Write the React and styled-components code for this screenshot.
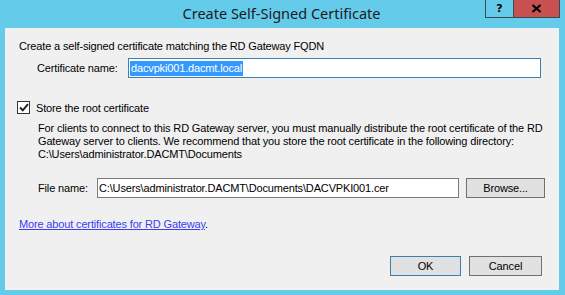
import React from "react";
import styled, { createGlobalStyle } from "styled-components";

const Global = createGlobalStyle`
  html, body { margin: 0; padding: 0; background: #65cbea; }
  * { box-sizing: border-box; }
`;

const Win = styled.div`
  width: 565px;
  height: 295px;
  background: #65cbea;
  padding: 0 6px 5px 5px;
  display: flex;
  flex-direction: column;
  font-family: "Liberation Sans", Arial, sans-serif;
  font-size: 11px;
  letter-spacing: -0.15px;
  color: #000;
`;

const TitleBar = styled.div`
  height: 28px;
  margin: 0 -6px 0 -5px;
  display: grid;
  grid-template-columns: 1fr auto 1fr;
  align-items: start;
`;

const Title = styled.div`
  grid-column: 2;
  font-family: "Noto Sans", "Open Sans", sans-serif;
  font-size: 14.5px;
  letter-spacing: 0;
  color: #1b1b1b;
  line-height: 18px;
  padding-top: 4px;
  margin-left: -2px;
`;

const Caption = styled.div`
  grid-column: 3;
  justify-self: end;
  display: flex;
  margin-right: 5px;
`;

const CapBtn = styled.div`
  height: 18px;
  width: ${(p) => p.$w}px;
  background: ${(p) => p.$bg};
  border: 1px solid #3b4a52;
  border-top: none;
  ${(p) => (p.$noLeft ? "border-left: none;" : "")}
  display: flex;
  align-items: center;
  justify-content: center;
  font-family: "DejaVu Sans", sans-serif;
  font-weight: bold;
  font-size: 11px;
  letter-spacing: 0;
  color: #000;
`;

const Client = styled.div`
  flex: 1;
  background: #f0f0f0;
  display: flex;
  flex-direction: column;
  padding: 12px 18px 0 14px;
`;

const Line = styled.div`
  line-height: 13px;
  white-space: nowrap;
  margin-left: ${(p) => p.$indent || 0}px;
  margin-top: ${(p) => p.$mt || 0}px;
`;

const Row = styled.div`
  display: flex;
  align-items: center;
  margin-top: ${(p) => p.$mt || 0}px;
  margin-left: ${(p) => p.$indent || 0}px;
`;

const Label = styled.span`
  width: ${(p) => p.$w}px;
  flex: none;
  line-height: 13px;
`;

const TextBox = styled.div`
  height: 20px;
  width: ${(p) => (p.$w ? `${p.$w}px` : "auto")};
  flex: ${(p) => (p.$w ? "none" : "1")};
  background: #fff;
  border: 1px solid ${(p) => (p.$focus ? "#3c7fb1" : "#7a7a7a")};
  display: flex;
  align-items: center;
  padding-left: 1px;
  white-space: nowrap;
  overflow: hidden;
`;

const Selected = styled.span`
  background: #3399ff;
  color: #fff;
  line-height: 15px;
  padding: 0 1px;
`;

const Button = styled.div`
  width: ${(p) => p.$w}px;
  height: 20px;
  flex: none;
  background: #e1e1e1;
  border: 1px solid ${(p) => (p.$default ? "#3c7fb1" : "#707070")};
  display: flex;
  align-items: center;
  justify-content: center;
  margin-left: ${(p) => p.$ml || 0}px;
`;

const Check = styled.div`
  width: 13px;
  height: 13px;
  flex: none;
  border: 1px solid #333;
  background: #fff;
  display: flex;
  align-items: center;
  justify-content: center;
  margin-right: 6px;
`;

const Link = styled.a`
  color: #3c3cf5;
  text-decoration: underline;
  text-underline-offset: 1px;
`;

const Footer = styled.div`
  display: flex;
  justify-content: flex-end;
  margin-top: 25px;
  margin-right: -1px;
`;

export default function App() {
  return (
    <>
      <Global />
      <Win>
        <TitleBar>
          <Title>Create Self-Signed Certificate</Title>
          <Caption>
            <CapBtn $w={29} $bg="#65cbea">?</CapBtn>
            <CapBtn $w={46} $bg="#c75050" $noLeft>
              <svg width="11" height="9" viewBox="0 0 11 9">
                <path d="M1.5 1 L9.5 8 M9.5 1 L1.5 8" stroke="#000" strokeWidth="2.2" />
              </svg>
            </CapBtn>
          </Caption>
        </TitleBar>
        <Client>
          <Line>Create a self-signed certificate matching the RD Gateway FQDN</Line>
          <Row $mt={5} $indent={18}>
            <Label $w={91}>Certificate name:</Label>
            <TextBox $focus>
              <Selected>dacvpki001.dacmt.local</Selected>
            </TextBox>
          </Row>
          <Row $mt={23} $indent={-2}>
            <Check>
              <svg width="10" height="9" viewBox="0 0 10 9">
                <path d="M1 4.5 L3.8 7.3 L9 1.2" fill="none" stroke="#222" strokeWidth="2" />
              </svg>
            </Check>
            <span>Store the root certificate</span>
          </Row>
          <Line $indent={19} $mt={8}>
            For clients to connect to this RD Gateway server, you must manually distribute the root certificate of the RD
          </Line>
          <Line $indent={19}>
            Gateway server to clients. We recommend that you store the root certificate in the following directory:
          </Line>
          <Line $indent={19}>C:\Users\administrator.DACMT\Documents</Line>
          <Row $mt={17} $indent={19}>
            <Label $w={59}>File name:</Label>
            <TextBox $w={362}>C:\Users\administrator.DACMT\Documents\DACVPKI001.cer</TextBox>
            <Button $w={79} $ml={7}>Browse...</Button>
          </Row>
          <Line $mt={20}>
            <Link href="#">More about certificates for RD Gateway</Link>.
          </Line>
          <Footer>
            <Button $w={71} $default>OK</Button>
            <Button $w={73} $ml={8}>Cancel</Button>
          </Footer>
        </Client>
      </Win>
    </>
  );
}
